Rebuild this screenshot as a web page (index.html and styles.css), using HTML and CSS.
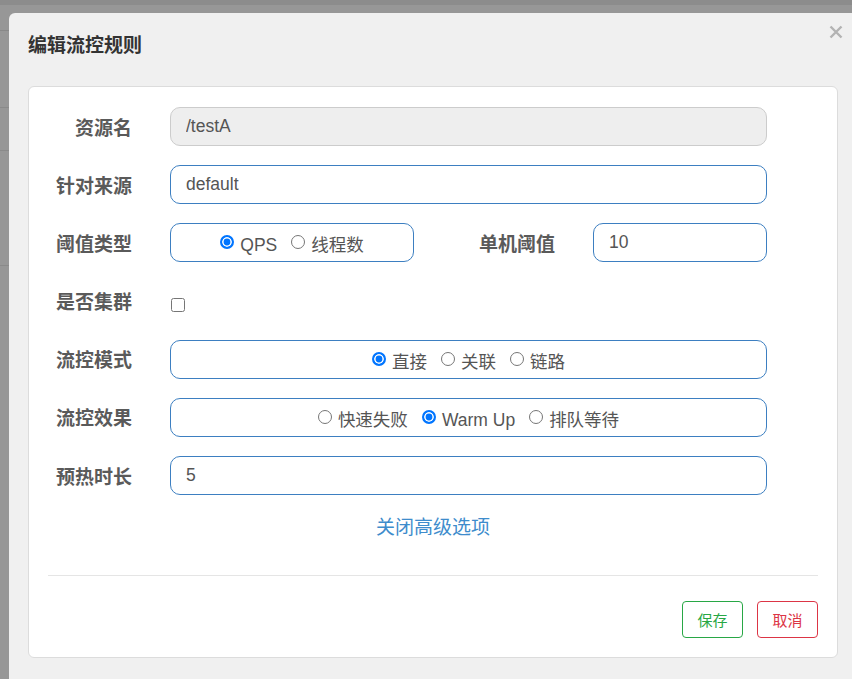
FILE: index.html
```html
<!DOCTYPE html>
<html lang="zh-CN">
<head>
<meta charset="utf-8">
<title>编辑流控规则</title>
<link rel="stylesheet" href="styles.css">
</head>
<body>
<div class="modal">
  <div class="modal-header">
    <h4 class="modal-title">编辑流控规则</h4>
    <button class="close" type="button" aria-label="关闭">
      <svg width="14" height="14" viewBox="0 0 14 14"><path d="M1.5 1.5 L12.5 12.5 M12.5 1.5 L1.5 12.5" stroke="#b3b3b3" stroke-width="2.4" stroke-linecap="butt"/></svg>
    </button>
  </div>
  <div class="panel">
    <form class="form">
      <div class="row">
        <label class="lbl">资源名</label>
        <input class="ctl ctl-disabled" type="text" value="/testA" readonly>
      </div>
      <div class="row">
        <label class="lbl">针对来源</label>
        <input class="ctl" type="text" value="default">
      </div>
      <div class="row">
        <label class="lbl">阈值类型</label>
        <div class="ctl group group-narrow">
          <label class="opt"><input type="radio" name="grade" checked>QPS</label>
          <label class="opt"><input type="radio" name="grade">线程数</label>
        </div>
        <label class="lbl lbl-second">单机阈值</label>
        <input class="ctl ctl-small" type="text" value="10">
      </div>
      <div class="row">
        <label class="lbl">是否集群</label>
        <input class="chk" type="checkbox">
      </div>
      <div class="row">
        <label class="lbl">流控模式</label>
        <div class="ctl group">
          <label class="opt"><input type="radio" name="strategy" checked>直接</label>
          <label class="opt"><input type="radio" name="strategy">关联</label>
          <label class="opt"><input type="radio" name="strategy">链路</label>
        </div>
      </div>
      <div class="row">
        <label class="lbl">流控效果</label>
        <div class="ctl group">
          <label class="opt"><input type="radio" name="behavior">快速失败</label>
          <label class="opt"><input type="radio" name="behavior" checked>Warm Up</label>
          <label class="opt"><input type="radio" name="behavior">排队等待</label>
        </div>
      </div>
      <div class="row">
        <label class="lbl">预热时长</label>
        <input class="ctl" type="text" value="5">
      </div>
      <div class="adv"><a class="adv-link" href="#">关闭高级选项</a></div>
    </form>
    <hr class="sep">
    <div class="footer">
      <button class="btn btn-save" type="button">保存</button>
      <button class="btn btn-cancel" type="button">取消</button>
    </div>
  </div>
</div>
</body>
</html>
```
FILE: styles.css
```css
html, body {
  margin: 0;
  padding: 0;
}
body {
  width: 852px;
  height: 679px;
  overflow: hidden;
  box-sizing: border-box;
  padding: 13px 0 0 9px;
  font-family: "Liberation Sans", "Noto Sans CJK SC", sans-serif;
  background-color: #979797;
  background-image:
    linear-gradient(#8c8c8c, #8c8c8c),
    linear-gradient(#888888, #888888),
    linear-gradient(#8a8a8a, #8a8a8a),
    linear-gradient(#8a8a8a, #8a8a8a),
    linear-gradient(#8a8a8a, #8a8a8a);
  background-size: 100% 5px, 100% 1px, 100% 1px, 100% 1px, 100% 1px;
  background-position: 0 0, 0 30px, 0 107px, 0 150px, 0 265px;
  background-repeat: no-repeat;
}
.modal {
  width: 860px;
  height: 680px;
  background: #f0f0f0;
  border-radius: 6px 0 0 0;
  box-sizing: border-box;
}
.modal-header {
  position: relative;
  height: 73px;
  box-sizing: border-box;
  padding: 19px 19px 0;
}
.modal-title {
  margin: 0;
  font-size: 19px;
  line-height: 28px;
  font-weight: bold;
  color: #333;
}
.close {
  position: absolute;
  top: 12px;
  right: 26px;
  width: 14px;
  height: 14px;
  padding: 0;
  border: 0;
  background: none;
  display: flex;
}
.panel {
  width: 810px;
  height: 572px;
  margin-left: 19px;
  box-sizing: border-box;
  background: #fff;
  border: 1px solid #dcdcdc;
  border-radius: 6px;
  padding: 20px 0 0;
}
.form {
  margin: 0;
}
.row {
  display: flex;
  align-items: center;
  height: 39px;
  margin-bottom: 19.2px;
}
.lbl {
  width: 103px;
  flex: none;
  text-align: right;
  margin-right: 38px;
  font-size: 19px;
  font-weight: bold;
  color: #5a5a5a;
  line-height: 27px;
  padding-top: 3px;
}
.lbl-second {
  width: 141px;
}
.ctl {
  width: 597px;
  height: 39px;
  box-sizing: border-box;
  border: 1px solid #3d7fc1;
  border-radius: 10px;
  padding: 0 15px;
  font-family: "Liberation Sans", "Noto Sans CJK SC", sans-serif;
  font-size: 17.5px;
  color: #555;
  background: #fff;
  outline: none;
  margin: 0;
}
.ctl-disabled {
  background: #eeeeee;
  border-color: #cccccc;
}
.ctl-small {
  width: 174px;
}
.group {
  display: flex;
  align-items: center;
  justify-content: center;
  gap: 14px;
  padding: 0;
}
.group-narrow {
  width: 244px;
}
.opt {
  display: inline-flex;
  align-items: center;
  font-size: 17.5px;
  color: #555;
  line-height: 24px;
  padding-top: 5px;
}
.opt input {
  appearance: none;
  -webkit-appearance: none;
  box-sizing: border-box;
  width: 14px;
  height: 14px;
  margin: 0 6px 0 0;
  border: 1px solid #767676;
  border-radius: 50%;
  background: #fff;
  position: relative;
  top: -3px;
}
.opt input:checked {
  border: 2px solid #0075ff;
  background: #0075ff;
  box-shadow: inset 0 0 0 1.6px #fff;
}
.chk {
  width: 14px;
  height: 14px;
  margin: 7px 0 0 1px;
}
.adv {
  text-align: center;
  height: 27px;
  line-height: 27px;
  margin-top: 18px;
}
.adv-link {
  font-size: 19px;
  color: #3e8ccc;
  text-decoration: none;
}
.sep {
  margin: 34px 19px 0;
  border: 0;
  border-top: 1px solid #e5e5e5;
  height: 0;
}
.footer {
  display: flex;
  justify-content: flex-end;
  gap: 14px;
  padding: 25px 19px 0;
}
.btn {
  width: 61px;
  height: 37px;
  box-sizing: border-box;
  border-radius: 4px;
  background: #fff;
  font-family: "Liberation Sans", "Noto Sans CJK SC", sans-serif;
  font-size: 15px;
  padding: 0;
}
.btn-save {
  border: 1px solid #28a745;
  color: #28a745;
}
.btn-cancel {
  border: 1px solid #dc3545;
  color: #dc3545;
}
```
